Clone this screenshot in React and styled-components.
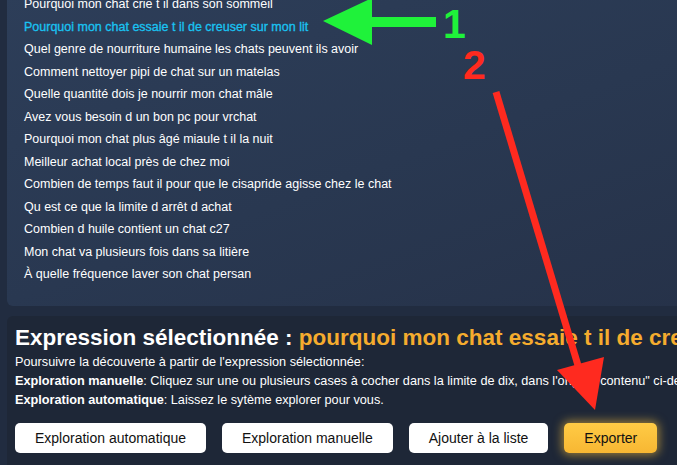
import React from "react";
import styled, { createGlobalStyle } from "styled-components";

const Global = createGlobalStyle`
  html, body { margin: 0; padding: 0; }
  body {
    width: 677px; height: 465px; overflow: hidden;
    background: #212c40;
    font-family: "Liberation Sans", Arial, Helvetica, sans-serif;
  }
`;

const Page = styled.div`
  position: relative;
  width: 677px;
  height: 465px;
  overflow: hidden;
  display: flex;
  flex-direction: column;
  gap: 10px;
  padding-left: 7px;
  box-sizing: border-box;
  background: #212c40;
`;

const ListPanel = styled.div`
  margin-top: -11px;
  width: 690px;
  border-radius: 6px;
  background: linear-gradient(160deg, #2d3e59 0%, #293851 55%, #263249 100%);
  padding: 4px 0 20px 17px;
  box-sizing: border-box;
`;

const List = styled.ul`
  list-style: none;
  margin: 0;
  padding: 0;
`;

const Item = styled.li`
  font-size: 12.5px;
  line-height: 22.5px;
  white-space: nowrap;
  color: ${(p) => (p.$active ? "#19c3f2" : "#ffffff")};
  -webkit-text-stroke: ${(p) => (p.$active ? "0.3px #19c3f2" : "0")};
`;

const SelectedPanel = styled.div`
  flex: 1;
  width: 700px;
  border-radius: 6px 0 0 0;
  background: #1e2737;
  padding: 9px 0 0 8px;
  box-sizing: border-box;
`;

const Title = styled.h2`
  margin: 0 0 2px 0;
  font-size: 22.5px;
  line-height: 26px;
  font-weight: 700;
  color: #ffffff;
  white-space: nowrap;
`;

const Highlight = styled.span`
  color: #f5ac2e;
`;

const Text = styled.p`
  margin: 0;
  font-size: 12.7px;
  line-height: 19px;
  color: #ffffff;
  white-space: nowrap;
`;

const Strong = styled.b`
  font-weight: 700;
`;

const Buttons = styled.div`
  display: flex;
  gap: 16px;
  margin-top: 13px;
`;

const Button = styled.button`
  height: 30px;
  padding: 0 20px;
  border: none;
  border-radius: 5px;
  font-family: "Liberation Sans", Arial, Helvetica, sans-serif;
  font-size: 14px;
  color: #111;
  background: ${(p) => (p.$primary ? "linear-gradient(180deg, #ffcb45, #f7b733)" : "#ffffff")};
  box-shadow: ${(p) => (p.$primary ? "0 0 10px 2px rgba(255, 196, 60, 0.55)" : "none")};
  cursor: pointer;
`;

const Overlay = styled.svg`
  position: absolute;
  left: 0;
  top: 0;
  pointer-events: none;
`;

const items = [
  "Pourquoi mon chat crie t il dans son sommeil",
  "Pourquoi mon chat essaie t il de creuser sur mon lit",
  "Quel genre de nourriture humaine les chats peuvent ils avoir",
  "Comment nettoyer pipi de chat sur un matelas",
  "Quelle quantité dois je nourrir mon chat mâle",
  "Avez vous besoin d un bon pc pour vrchat",
  "Pourquoi mon chat plus âgé miaule t il la nuit",
  "Meilleur achat local près de chez moi",
  "Combien de temps faut il pour que le cisapride agisse chez le chat",
  "Qu est ce que la limite d arrêt d achat",
  "Combien d huile contient un chat c27",
  "Mon chat va plusieurs fois dans sa litière",
  "À quelle fréquence laver son chat persan",
];

export default function App() {
  return (
    <>
      <Global />
      <Page>
        <ListPanel>
          <List>
            {items.map((t, i) => (
              <Item key={i} $active={i === 1}>{t}</Item>
            ))}
          </List>
        </ListPanel>
        <SelectedPanel>
          <Title>
            Expression sélectionnée : <Highlight>pourquoi mon chat essaie t il de creuser sur mon lit</Highlight>
          </Title>
          <Text>Poursuivre la découverte à partir de l'expression sélectionnée:</Text>
          <Text>
            <Strong>Exploration manuelle</Strong>: Cliquez sur une ou plusieurs cases à cocher dans la limite de dix, dans l'onglet "contenu" ci-dessous.
          </Text>
          <Text>
            <Strong>Exploration automatique</Strong>: Laissez le sytème explorer pour vous.
          </Text>
          <Buttons>
            <Button>Exploration automatique</Button>
            <Button>Exploration manuelle</Button>
            <Button>Ajouter à la liste</Button>
            <Button $primary>Exporter</Button>
          </Buttons>
        </SelectedPanel>
        <Overlay width="677" height="465" viewBox="0 0 677 465">
          <polygon points="323,21 372,-2 372,17 436,17 436,27 372,27 372,45" fill="#1ff23a" />
          <text x="443" y="38" fill="#1ff23a" fontSize="41" fontWeight="700" fontFamily="Liberation Sans, Arial, sans-serif">1</text>
          <text x="463" y="79" fill="#ff2a1f" fontSize="41" fontWeight="700" fontFamily="Liberation Sans, Arial, sans-serif">2</text>
          <line x1="496" y1="92" x2="580" y2="372" stroke="#ff2a1f" strokeWidth="7" />
          <polygon points="557,370 604,357 595,410" fill="#ff2a1f" />
        </Overlay>
      </Page>
    </>
  );
}
